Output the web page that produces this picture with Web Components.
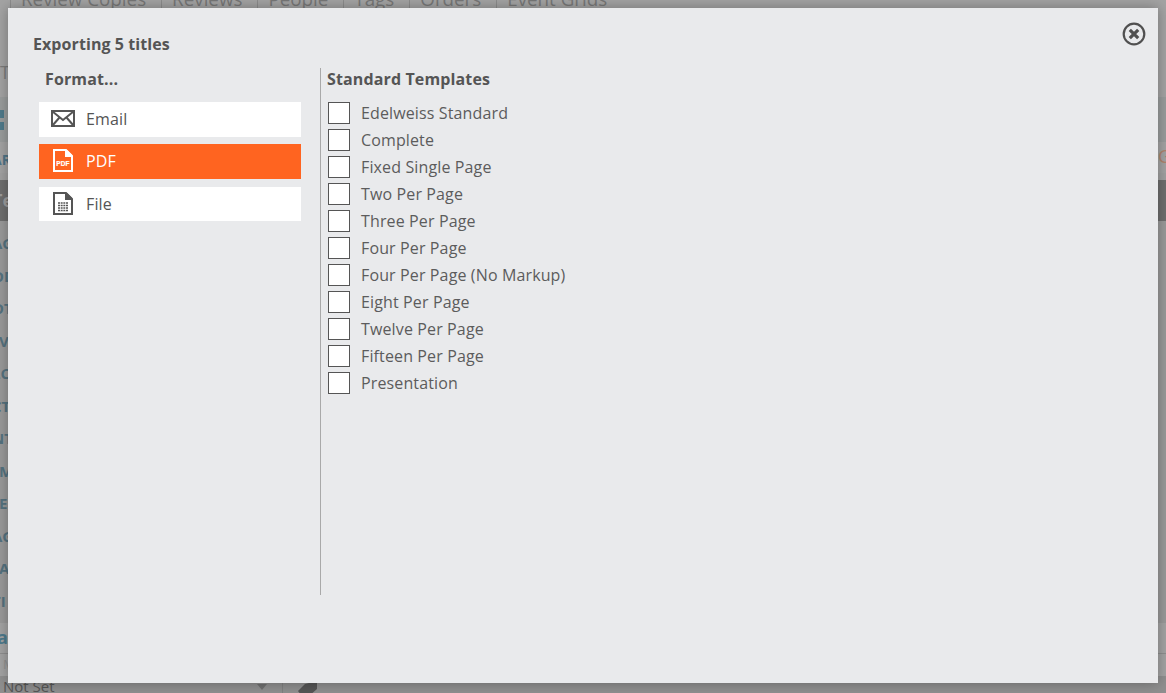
<!DOCTYPE html>
<html>
<head>
<meta charset="utf-8">
<style>
  html, body { margin: 0; height: 100%; overflow: hidden; background: #a3a3a3; font-family: "Open Sans", sans-serif; }
  format-option[icon="file"] { height: 34px; margin-top: 1px; }
</style>
</head>
<body>
<page-backdrop></page-backdrop>
<export-dialog title-text="Exporting 5 titles">
  <format-option slot="formats" icon="email">Email</format-option>
  <format-option slot="formats" icon="pdf" selected>PDF</format-option>
  <format-option slot="formats" icon="file">File</format-option>
  <template-option>Edelweiss Standard</template-option>
  <template-option>Complete</template-option>
  <template-option>Fixed Single Page</template-option>
  <template-option>Two Per Page</template-option>
  <template-option>Three Per Page</template-option>
  <template-option>Four Per Page</template-option>
  <template-option>Four Per Page (No Markup)</template-option>
  <template-option>Eight Per Page</template-option>
  <template-option>Twelve Per Page</template-option>
  <template-option>Fifteen Per Page</template-option>
  <template-option>Presentation</template-option>
</export-dialog>

<script>
const ICONS = {
  email: `<svg width="24" height="17" viewBox="0 0 24 17"><rect x="1" y="1" width="22" height="15" fill="none" stroke="currentColor" stroke-width="2"/><path d="M1.500 1.500 12 10 22.500 1.500M1.500 15.500 8.500 7.500M22.500 15.500 15.500 7.500" fill="none" stroke="currentColor" stroke-width="2"/></svg>`,
  pdf: `<svg width="20" height="23" viewBox="0 0 20 23"><path d="M1 1H13L19 7V22H1Z" fill="none" stroke="currentColor" stroke-width="2"/><path d="M12 1H14L19 6V8H12Z" fill="currentColor"/><text x="10" y="17" text-anchor="middle" font-family="Liberation Sans" font-weight="700" font-size="6.500" fill="currentColor" stroke="currentColor" stroke-width=".2">PDF</text></svg>`,
  file: `<svg width="20" height="23" viewBox="0 0 20 23"><path d="M1 1H13L19 7V22H1Z" fill="none" stroke="currentColor" stroke-width="2"/><path d="M12 1H14L19 6V8H12Z" fill="currentColor"/><path d="M5 11H15M5 13.500H15M5 16H15M5 18.500H15" fill="none" stroke="currentColor" stroke-width="1.500"/><path d="M7.500 10V19.500M10 10V19.500M12.500 10V19.500" fill="none" stroke="#fff" stroke-width=".7"/></svg>`
};

class PageBackdrop extends HTMLElement {
  constructor() {
    super();
    const tabs = ['Review Copies', 'Reviews', 'People', 'Tags', 'Orders', 'Event Grids'];
    const side = ['AG', 'OD', 'OT', 'V', 'LC', 'CT', 'NT', 'M', 'E', 'AG', 'A', 'TI'];
    this.attachShadow({ mode: 'open' }).innerHTML = `
      <style>
        :host { display: block; height: 693px; overflow: hidden; color: #666; font-size: 18px; }
        .tabs { display: flex; height: 8px; align-items: flex-end; padding-left: 10px; overflow: hidden; }
        .tabs span { flex: none; padding: 0 15px 0 10px; border-right: 1px solid #8c8c8c; line-height: 24px; height: 24px; margin-bottom: -3px; color: #777; font-size: 18.800px; }
        .tabs span:first-child { border-left: 1px solid #8c8c8c; }
        .tabs span:last-child { border-right: 0; }
        .t { height: 89px; padding-top: 54px; box-sizing: border-box; font-size: 18px; line-height: 20px; color: #7b7b7b; overflow: hidden; }
        .tools { height: 45px; padding-top: 13px; box-sizing: border-box; background: #999c9c; display: grid; grid-template-columns: 4px; gap: 4px; align-content: start; }
        .tools i { height: 8px; background: #4f7a8a; }
        .bar { height: 38px; background: #a3a3a3; color: #507587; font: 700 14px/36px "Open Sans", sans-serif; display: flex; justify-content: space-between; box-shadow: inset 0 -7px 0 #a0a0a0; }
        .bar span { margin-left: -8px; }
        .bar b { color: #b0846e; font-weight: 400; font-size: 18px; line-height: 28px; margin-right: -5px; }
        .head { height: 41px; background: #6e6e6e; color: #9c9c9c; font-weight: 700; font-size: 18px; line-height: 40px; }
        .head span { margin-left: -8px; }
        .side { background: #999; height: 402px; padding-top: 6px; box-sizing: border-box; display: flex; flex-direction: column; align-items: flex-start; }
        .side span { flex: none; height: 32.500px; font: 700 15px/32.500px "Open Sans", sans-serif; color: #55727f; margin-left: -8px; }
        .side span.one { margin-left: -1px; }
        .a { height: 31px; background: #a3a3a3; border-bottom: 1px solid #8e8e8e; box-sizing: border-box; font-weight: 700; line-height: 29px; color: #4e7a8c; font-size: 18px; }
        .a span { margin-left: -3px; }
        .m { height: 22px; background: #a3a3a3; color: #8f8f8f; font-size: 13px; line-height: 20px; padding-left: 3px; overflow: hidden; }
        .foot { display: flex; align-items: center; height: 14px; background: #8f8f8f; color: #555; font-size: 15px; line-height: 17px; padding: 3px 0 0 3px; }
        .arrow { margin-left: 202px; width: 0; height: 0; border: 5px solid transparent; border-top: 6px solid #6f6f6f; border-bottom: 0; margin-right: 15px; margin-top: 2px; }
        .sep { width: 1px; height: 24px; background: #808080; margin-right: 14px; }
        .foot svg { flex: none; margin-top: 6px; }
      </style>
      <div class="tabs">${tabs.map(t => `<span>${t}</span>`).join('')}</div>
      <div class="t">T</div>
      <div class="tools"><i></i><i></i></div>
      <div class="bar"><span>AR</span><b>G</b></div>
      <div class="head"><span>Te</span></div>
      <div class="side">${side.map(s => `<span class="${s.length == 1 ? 'one' : ''}">${s}</span>`).join('')}</div>
      <div class="a"><span>a</span></div>
      <div class="m">M</div>
      <div class="foot">Not Set<span class="arrow"></span><span class="sep"></span>
        <svg width="22" height="16" viewBox="0 0 22 16"><path d="M1 10 8 3 20 0 20 8 12 15 4 14Z" fill="#555"/></svg></div>`;
  }
}

class ExportDialog extends HTMLElement {
  constructor() {
    super();
    this.attachShadow({ mode: 'open' }).innerHTML = `
      <style>
        :host { position: absolute; left: 8px; top: 8px; width: 1150px; height: 675px; background: #e9eaec; color: #555; box-shadow: 0 0 12px rgba(0,0,0,.3); font-size: 16px; letter-spacing: .13px; }
        .title { padding: 25px 0 0 25px; font-weight: 700; line-height: 22px; height: 22px; letter-spacing: .08px; }
        .close { position: absolute; right: 12px; top: 14px; width: 24px; height: 24px; color: #505050; }
        .body { display: flex; margin-top: 13px; height: 527px; }
        .formats { width: 262px; margin-left: 31px; flex: none; }
        .heading { font-weight: 700; line-height: 22px; height: 22px; }
        .formats .heading { padding-left: 6px; margin-bottom: 12px; }
        .list { display: flex; flex-direction: column; gap: 7px; }
        .rule { width: 1px; background: #a9a9a9; margin-left: 19px; flex: none; }
        .templates { padding-left: 6px; }
        .templates .heading { margin-bottom: 12px; }
        .rows { display: flex; flex-direction: column; gap: 5px; }
      </style>
      <div class="title">${this.getAttribute('title-text')}</div>
      <div class="close"><svg width="24" height="24" viewBox="0 0 24 24"><circle cx="12" cy="12" r="10.300" fill="none" stroke="currentColor" stroke-width="2.200"/><path d="M7.800 7.800 16.200 16.200M16.200 7.800 7.800 16.200" stroke="currentColor" stroke-width="3.200" fill="none"/></svg></div>
      <div class="body">
        <div class="formats">
          <div class="heading">Format...</div>
          <div class="list"><slot name="formats"></slot></div>
        </div>
        <div class="rule"></div>
        <div class="templates">
          <div class="heading">Standard Templates</div>
          <div class="rows"><slot></slot></div>
        </div>
      </div>`;
  }
}

class FormatOption extends HTMLElement {
  constructor() {
    super();
    this.attachShadow({ mode: 'open' }).innerHTML = `
      <style>
        :host { display: flex; align-items: center; height: 35px; background: #fff; color: #555; font-size: 16px; }
        :host([selected]) { background: #ff6420; color: #fff; }
        .icon { width: 47px; box-sizing: border-box; flex: none; display: flex; justify-content: center; padding-left: 1px; margin-top: -2px; }
        .label { margin-top: -1px; }
        svg { display: block; }
      </style>
      <span class="icon">${ICONS[this.getAttribute('icon')]}</span><span class="label"><slot></slot></span>`;
  }
}

class TemplateOption extends HTMLElement {
  constructor() {
    super();
    this.attachShadow({ mode: 'open' }).innerHTML = `
      <style>
        :host { display: flex; align-items: center; height: 22px; color: #5c5c5c; font-size: 16px; }
        .box { width: 20px; height: 20px; border: 1px solid #555; background: #fff; margin: 0 11px 0 1px; flex: none; }
      </style>
      <span class="box"></span><slot></slot>`;
  }
}

customElements.define('page-backdrop', PageBackdrop);
customElements.define('export-dialog', ExportDialog);
customElements.define('format-option', FormatOption);
customElements.define('template-option', TemplateOption);
</script>
</body>
</html>
